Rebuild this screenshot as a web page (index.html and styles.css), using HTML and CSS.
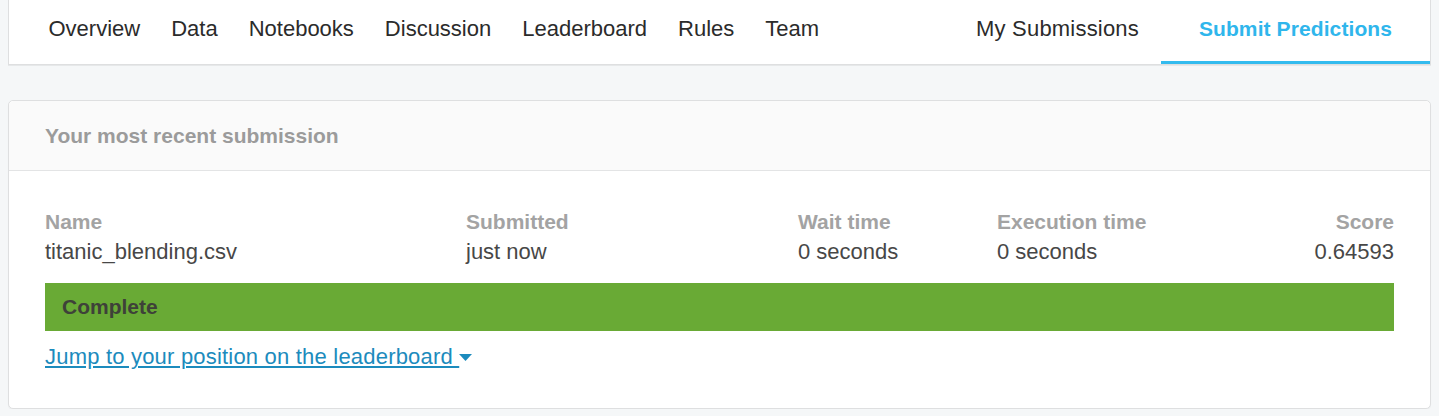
FILE: index.html
```html
<!DOCTYPE html>
<html>
<head>
<meta charset="utf-8">
<link rel="stylesheet" href="styles.css">
</head>
<body>
<nav class="nav">
  <div class="nav-left">
    <a class="tab">Overview</a>
    <a class="tab">Data</a>
    <a class="tab">Notebooks</a>
    <a class="tab">Discussion</a>
    <a class="tab">Leaderboard</a>
    <a class="tab">Rules</a>
    <a class="tab">Team</a>
  </div>
  <div class="nav-right">
    <a class="tab tab-mine">My Submissions</a>
    <a class="tab tab-active">Submit Predictions</a>
  </div>
</nav>

<section class="card">
  <header class="card-head">Your most recent submission</header>
  <div class="card-body">
    <div class="grid">
      <div class="label">Name</div>
      <div class="label">Submitted</div>
      <div class="label">Wait time</div>
      <div class="label">Execution time</div>
      <div class="label right">Score</div>
      <div class="value">titanic_blending.csv</div>
      <div class="value">just now</div>
      <div class="value">0 seconds</div>
      <div class="value">0 seconds</div>
      <div class="value right">0.64593</div>
    </div>
    <div class="status">Complete</div>
    <a class="jump">Jump to your position on the leaderboard <span class="caret"><svg width="13" height="7" viewBox="0 0 13 7"><path d="M0 0H13L6.5 7Z" fill="#1c8bbd"/></svg></span></a>
  </div>
</section>
</body>
</html>
```

FILE: styles.css
```css
html, body {
  margin: 0;
  padding: 0;
  background: #f5f7f8;
}
body {
  padding: 0 8px;
  font-family: "Liberation Sans", Arial, sans-serif;
  color: #333;
}
.nav {
  display: flex;
  justify-content: space-between;
  background: #fff;
  height: 64px;
  border: 1px solid #dedfe0;
  border-top: none;
  box-shadow: 0 1px 0 #e6e8e9;
  padding-left: 24px;
}
.nav-left, .nav-right {
  display: flex;
}
.tab {
  display: block;
  box-sizing: border-box;
  height: 64px;
  padding: 16px 15.5px 0;
  font-size: 22px;
  line-height: 26px;
  color: #2b2b2b;
  white-space: nowrap;
}
.tab-mine {
  padding: 16px 22px 0;
  letter-spacing: 0.2px;
}
.tab-active {
  width: 269px;
  text-align: center;
  padding: 16px 0 0;
  font-weight: bold;
  font-size: 21px;
  letter-spacing: 0.1px;
  color: #2fb6ec;
  border-bottom: 3px solid #33bbee;
}
.card {
  margin-top: 35px;
  background: #fff;
  border: 1px solid #dedfe0;
  border-radius: 5px;
  box-shadow: 0 1px 1px rgba(0,0,0,0.04);
}
.card-head {
  height: 69px;
  display: flex;
  align-items: center;
  padding: 0 36px;
  background: #fafafa;
  border-bottom: 1px solid #e3e4e5;
  border-radius: 5px 5px 0 0;
  font-weight: bold;
  font-size: 21px;
  color: #9b9b9b;
}
.card-body {
  padding: 36px 36px 37px;
}
.grid {
  display: grid;
  grid-template-columns: 421px 332px 199px 1fr auto;
  line-height: 30px;
}
.label {
  font-weight: bold;
  font-size: 21px;
  color: #a3a3a3;
}
.value {
  font-size: 22px;
  color: #474747;
}
.right {
  text-align: right;
}
.status {
  margin-top: 16px;
  height: 48px;
  display: flex;
  align-items: center;
  padding-left: 17px;
  background: #69aa35;
  font-weight: bold;
  font-size: 21px;
  color: #3e4139;
}
.jump {
  display: inline-block;
  margin-top: 11px;
  font-size: 22px;
  line-height: 29px;
  letter-spacing: 0.2px;
  color: #1c8bbd;
  text-decoration: underline;
  text-underline-offset: 2px;
}
.caret {
  display: inline-block;
  vertical-align: 3px;
}
.caret svg {
  display: block;
}
```
